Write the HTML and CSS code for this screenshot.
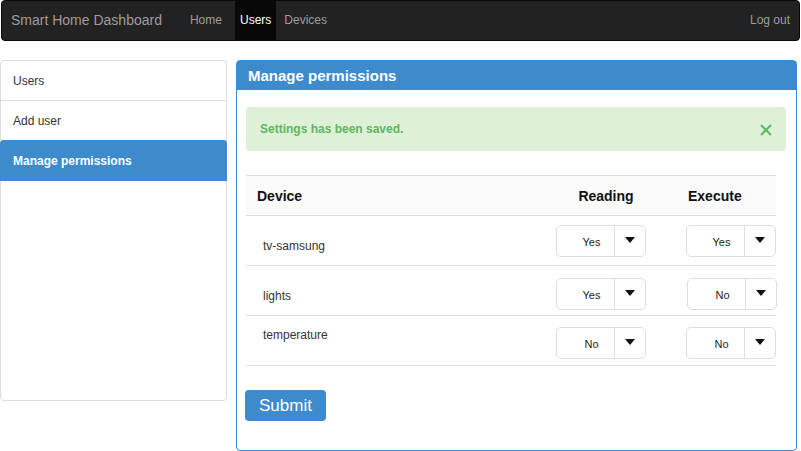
FILE: index.html
```html
<!DOCTYPE html>
<html lang="en">
<head>
<meta charset="utf-8">
<title>Smart Home Dashboard</title>
<link rel="stylesheet" href="styles.css">
</head>
<body>
<nav class="navbar">
  <a class="brand">Smart Home Dashboard</a>
  <ul class="nav">
    <li><a>Home</a></li>
    <li class="active"><a>Users</a></li>
    <li><a>Devices</a></li>
  </ul>
  <a class="logout">Log out</a>
</nav>

<div class="main">
  <aside class="sidebar">
    <a class="side-item">Users</a>
    <a class="side-item">Add user</a>
    <a class="side-item active">Manage permissions</a>
  </aside>

  <section class="panel">
    <div class="panel-heading">Manage permissions</div>
    <div class="panel-body">
      <div class="alert">
        <span>Settings has been saved.</span>
        <svg class="close" width="12" height="12" viewBox="0 0 12 12"><path d="M1 1 L11 11 M11 1 L1 11" stroke="#5cb85c" stroke-width="2" fill="none"/></svg>
      </div>

      <div class="table">
        <div class="thead">
          <div class="th th-device">Device</div>
          <div class="th th-reading">Reading</div>
          <div class="th th-execute">Execute</div>
        </div>
        <div class="tr">
          <div class="td-device">tv-samsung</div>
          <div class="td-reading"><div class="select"><span class="value">Yes</span><span class="caret"></span></div></div>
          <div class="td-execute"><div class="select"><span class="value">Yes</span><span class="caret"></span></div></div>
        </div>
        <div class="tr tr-low">
          <div class="td-device">lights</div>
          <div class="td-reading"><div class="select"><span class="value">Yes</span><span class="caret"></span></div></div>
          <div class="td-execute shift"><div class="select"><span class="value">No</span><span class="caret"></span></div></div>
        </div>
        <div class="tr tr-last">
          <div class="td-device top">temperature</div>
          <div class="td-reading"><div class="select"><span class="value">No</span><span class="caret"></span></div></div>
          <div class="td-execute"><div class="select"><span class="value">No</span><span class="caret"></span></div></div>
        </div>
      </div>

      <button class="btn">Submit</button>
    </div>
  </section>
</div>
</body>
</html>
```

FILE: styles.css
```css
* { box-sizing: border-box; }

body {
  margin: 0;
  font-family: "Liberation Sans", Arial, sans-serif;
  color: #333;
  background: #fff;
}

.navbar {
  display: flex;
  align-items: stretch;
  height: 41px;
  margin: 0 1px;
  background: #222;
  border: 1px solid #080808;
  border-radius: 4px;
}

.brand {
  color: #9d9d9d;
  font-size: 14px;
  line-height: 39px;
  padding: 0 18px 0 9px;
}

.nav {
  display: flex;
  list-style: none;
  margin: 0 0 0 7px;
  padding: 0;
}

.nav li a {
  display: block;
  color: #9d9d9d;
  font-size: 12px;
  line-height: 39px;
  padding: 0 4px 0 3px;
  margin-right: 9px;
}

.nav li.active a {
  background: #080808;
  color: #fff;
  padding: 0 5px;
  margin-right: 5px;
}

.logout {
  margin-left: auto;
  color: #9d9d9d;
  font-size: 12px;
  line-height: 39px;
  padding-right: 9px;
}

.main {
  display: flex;
  gap: 9px;
  padding-top: 19px;
  padding-right: 4px;
}

.sidebar {
  width: 227px;
  height: 341px;
  border: 1px solid #ddd;
  border-radius: 4px;
  display: flex;
  flex-direction: column;
}

.side-item {
  display: block;
  height: 40px;
  line-height: 40px;
  padding-left: 12px;
  font-size: 12px;
  color: #333;
  border-bottom: 1px solid #ddd;
}

.side-item.active {
  background: #3d8bcd;
  color: #fff;
  font-weight: bold;
  border-bottom: none;
  border-radius: 4px 4px 0 0;
  margin: -1px -1px 0;
  padding-left: 13px;
  padding-top: 2px;
  height: 41px;
  line-height: 39px;
}

.panel {
  flex: 1;
  height: 391px;
  border: 1px solid #3d8bcd;
  border-radius: 4px;
}

.panel-heading {
  background: #3d8bcd;
  color: #fff;
  font-weight: bold;
  font-size: 15px;
  height: 29px;
  line-height: 30px;
  padding-left: 11px;
}

.panel-body {
  padding: 17px 10px 0 9px;
}

.alert {
  display: flex;
  align-items: center;
  justify-content: space-between;
  height: 44px;
  background: #dff0d8;
  border-radius: 4px;
  padding: 0 14px 0 14px;
  color: #5cb85c;
  font-weight: bold;
  font-size: 12px;
  margin-bottom: 24px;
}

.close { margin-top: 1px; }

.table {
  width: 530px;
}

.thead, .tr {
  display: grid;
  grid-template-columns: 300px 120px 110px;
  border-top: 1px solid #ddd;
}

.thead {
  height: 40px;
  background: #fafafa;
  align-items: center;
  font-weight: bold;
  font-size: 14px;
  color: #111;
}

.th-device { padding-left: 11px; }
.th-reading { text-align: center; }
.th-execute { padding-left: 22px; }

.tr {
  height: 50px;
  align-items: start;
  padding-top: 9px;
  font-size: 12px;
}

.tr-low { padding-top: 12px; }

.tr-last {
  border-bottom: 1px solid #ddd;
  height: 51px;
  padding-top: 11px;
}

.td-device {
  padding-left: 17px;
  padding-top: 14px;
  font-size: 12px;
  color: #333;
}

.tr-low .td-device { padding-top: 11px; }

.td-device.top { padding-top: 1px; }

.td-reading { padding-left: 10px; }
.td-execute { padding-left: 20px; }
.td-execute.shift { padding-left: 21px; }

.select {
  display: flex;
  width: 90px;
  height: 32px;
  border: 1px solid #ddd;
  border-radius: 5px;
  background: #fff;
}

.value {
  width: 58px;
  border-right: 1px solid #ddd;
  display: flex;
  align-items: center;
  justify-content: center;
  padding-left: 12px;
  padding-top: 2px;
  font-size: 11px;
  color: #222;
}

.caret {
  flex: 1;
  display: flex;
  align-items: center;
  justify-content: center;
}

.caret::after {
  content: "";
  width: 0;
  height: 0;
  border-left: 5px solid transparent;
  border-right: 5px solid transparent;
  border-top: 6px solid #111;
  margin-top: -2px;
}

.btn {
  margin-top: 24px;
  margin-left: -1px;
  height: 31px;
  padding: 0 14px;
  background: #3d8bcd;
  color: #fff;
  border: none;
  border-radius: 4px;
  font-family: "Liberation Sans", Arial, sans-serif;
  font-size: 17px;
}
```
